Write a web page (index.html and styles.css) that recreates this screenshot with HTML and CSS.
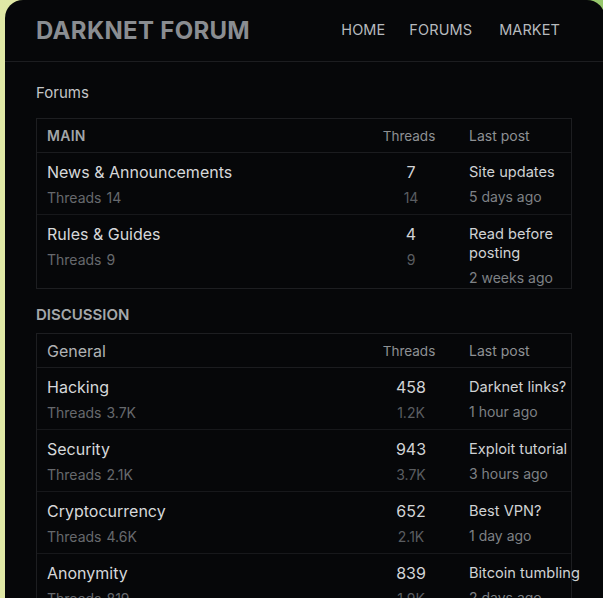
FILE: index.html
```html
<!DOCTYPE html>
<html lang="en">
<head>
<meta charset="utf-8">
<title>Darknet Forum</title>
<link rel="stylesheet" href="styles.css">
</head>
<body>
<div class="panel">
  <header class="topbar">
    <div class="brand">DARKNET FORUM</div>
    <nav class="nav">
      <a class="nav-link">HOME</a>
      <a class="nav-link">FORUMS</a>
      <a class="nav-link nav-link--last">MARKET</a>
    </nav>
  </header>

  <main class="content">
    <div class="page-label">Forums</div>

    <section class="board">
      <div class="board-head grid">
        <div class="head-name head-name--caps">MAIN</div>
        <div class="head-col head-col--center">Threads</div>
        <div class="head-col head-col--last">Last post</div>
      </div>
      <div class="row grid">
        <div class="cell-name">
          <div class="title">News &amp; Announcements</div>
          <div class="sub">Threads<span class="sub-num">14</span></div>
        </div>
        <div class="cell-count">
          <div class="count">7</div>
          <div class="count-sub">14</div>
        </div>
        <div class="cell-last">
          <div class="last-title">Site updates</div>
          <div class="last-time">5 days ago</div>
        </div>
      </div>
      <div class="row grid row--end">
        <div class="cell-name">
          <div class="title">Rules &amp; Guides</div>
          <div class="sub">Threads<span class="sub-num">9</span></div>
        </div>
        <div class="cell-count">
          <div class="count">4</div>
          <div class="count-sub">9</div>
        </div>
        <div class="cell-last cell-last--narrow">
          <div class="last-title">Read before posting</div>
          <div class="last-time">2 weeks ago</div>
        </div>
      </div>
    </section>

    <div class="section-label">DISCUSSION</div>

    <section class="board">
      <div class="board-head grid">
        <div class="head-name">General</div>
        <div class="head-col head-col--center">Threads</div>
        <div class="head-col head-col--last">Last post</div>
      </div>
      <div class="row grid">
        <div class="cell-name">
          <div class="title">Hacking</div>
          <div class="sub">Threads<span class="sub-num">3.7K</span></div>
        </div>
        <div class="cell-count">
          <div class="count">458</div>
          <div class="count-sub">1.2K</div>
        </div>
        <div class="cell-last">
          <div class="last-title">Darknet links?</div>
          <div class="last-time">1 hour ago</div>
        </div>
      </div>
      <div class="row grid">
        <div class="cell-name">
          <div class="title">Security</div>
          <div class="sub">Threads<span class="sub-num">2.1K</span></div>
        </div>
        <div class="cell-count">
          <div class="count">943</div>
          <div class="count-sub">3.7K</div>
        </div>
        <div class="cell-last">
          <div class="last-title">Exploit tutorial</div>
          <div class="last-time">3 hours ago</div>
        </div>
      </div>
      <div class="row grid">
        <div class="cell-name">
          <div class="title">Cryptocurrency</div>
          <div class="sub">Threads<span class="sub-num">4.6K</span></div>
        </div>
        <div class="cell-count">
          <div class="count">652</div>
          <div class="count-sub">2.1K</div>
        </div>
        <div class="cell-last">
          <div class="last-title">Best VPN?</div>
          <div class="last-time">1 day ago</div>
        </div>
      </div>
      <div class="row grid">
        <div class="cell-name">
          <div class="title">Anonymity</div>
          <div class="sub">Threads<span class="sub-num">819</span></div>
        </div>
        <div class="cell-count">
          <div class="count">839</div>
          <div class="count-sub">1.9K</div>
        </div>
        <div class="cell-last">
          <div class="last-title">Bitcoin tumbling</div>
          <div class="last-time">2 days ago</div>
        </div>
      </div>
    </section>
  </main>
</div>
</body>
</html>
```

FILE: styles.css
```css
html, body {
  margin: 0;
  padding: 0;
  height: 100%;
  overflow: hidden;
}

body {
  background: linear-gradient(90deg, #e0e8a6 0%, #c9e08e 60%, #96c76c 100%);
  font-family: "Inter", "Liberation Sans", sans-serif;
  color: #d4d6d8;
}

.panel {
  margin-left: 5px;
  width: 600px;
  min-height: 100%;
  background: #060709;
  border-radius: 18px 18px 0 0;
}

.topbar {
  display: flex;
  align-items: center;
  justify-content: space-between;
  height: 61px;
  padding: 0 45px 0 31px;
  border-bottom: 1px solid #1c1d20;
}

.brand {
  font-size: 24px;
  font-weight: 700;
  color: #8a8d91;
  letter-spacing: 0.3px;
  padding-bottom: 1px;
}

.nav {
  display: flex;
  gap: 24px;
  padding-bottom: 3px;
}

.nav-link {
  font-size: 14.5px;
  color: #b6babe;
  letter-spacing: 0.1px;
}

.nav-link--last {
  margin-left: 3px;
}

.content {
  padding: 0 31px;
}

.page-label {
  font-size: 15px;
  line-height: 20px;
  color: #c4c6c8;
  padding-top: 21px;
  margin-bottom: 15px;
}

.section-label {
  font-size: 15px;
  font-weight: 600;
  line-height: 20px;
  color: #a4a7aa;
  margin: 16px 0 8px;
}

.board {
  width: 534px;
  border: 1px solid #1d1e21;
}

.grid {
  display: grid;
  grid-template-columns: minmax(0, 1fr) 80px 121px;
  padding-left: 10px;
}

.board-head {
  height: 33px;
  align-items: center;
  border-bottom: 1px solid #1b1c1f;
}

.head-name {
  font-size: 16px;
  color: #b0b2b4;
}

.head-name--caps {
  font-size: 14px;
  font-weight: 600;
  color: #a2a5a8;
  letter-spacing: 0.3px;
}

.head-col {
  font-size: 13.5px;
  color: #8e9194;
}

.head-col--center {
  text-align: center;
  padding-right: 2px;
}

.head-col--last {
  padding-left: 19px;
  font-size: 14px;
}

.row {
  border-bottom: 1px solid #17181b;
  align-items: start;
}

.row--end {
  border-bottom: none;
}

.cell-name,
.cell-count {
  padding: 9px 0 6px;
}

.cell-count {
  text-align: center;
  padding-left: 2px;
}

.title {
  font-size: 16px;
  line-height: 21px;
  color: #d6d8da;
}

.sub {
  margin-top: 5px;
  font-size: 14px;
  line-height: 20px;
  color: #66696d;
}

.sub-num {
  margin-left: 5px;
}

.count {
  font-size: 16px;
  line-height: 21px;
  color: #d2d4d6;
}

.count-sub {
  margin-top: 5px;
  font-size: 14px;
  line-height: 20px;
  color: #5a5d61;
}

.cell-last {
  padding: 10px 0 0 19px;
  margin-right: -24px;
}

.cell-last--narrow {
  margin-right: 0;
}

.last-title {
  font-size: 14.6px;
  line-height: 19px;
  color: #d0d2d4;
}

.last-time {
  margin-top: 5px;
  font-size: 14px;
  line-height: 20px;
  color: #7e8185;
}
```
